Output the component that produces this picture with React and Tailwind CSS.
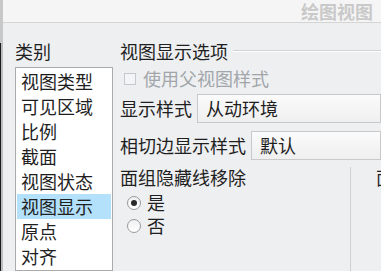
import React from "react";

const font = { fontFamily: '"Noto Sans CJK SC", "Noto Sans", sans-serif' };

function Combo({ text }) {
  return (
    <div className="ml-[5px] flex-1 h-[29px] border border-[#c9c9c9] bg-gradient-to-b from-[#fbfbfb] to-[#efefef] flex items-center pl-[8px] text-[18px] text-[#1f1f1f] whitespace-nowrap">
      {text}
    </div>
  );
}

function Radio({ checked, label }) {
  return (
    <div className="h-[23px] flex items-center pl-[7px]">
      <div className="w-[14px] h-[14px] rounded-full border border-[#9a9a9a] bg-gradient-to-b from-[#f0f0f0] to-[#ffffff] flex items-center justify-center">
        {checked && <div className="w-[6px] h-[6px] rounded-full bg-[#2a2a2a]" />}
      </div>
      <span className="ml-[6px] text-[18px] leading-[23px] text-[#1f1f1f]">{label}</span>
    </div>
  );
}

export default function App() {
  const items = ["视图类型", "可见区域", "比例", "截面", "视图状态", "视图显示", "原点", "对齐"];
  return (
    <div className="w-[381px] h-[271px] overflow-hidden flex bg-[#eeeff1]" style={font}>
      <div className="w-[3px] flex flex-col shrink-0">
        <div className="h-[43px] bg-[#c8c8c8]" />
        <div className="flex-1 bg-[#bdbdbd] border-l border-[#1a1a1a]" />
      </div>
      <div className="flex-1 flex flex-col min-w-0">
        <div className="h-[23px] shrink-0 bg-[#f5f5f6] border-b border-[#d4d4d4] flex items-center justify-end pr-[8px]">
          <span className="text-[18px] leading-[22px] font-bold text-[#c9c9c9]">绘图视图</span>
        </div>
        <div className="flex-1 flex pl-[12px] pt-[16px] min-h-0">
          <div className="w-[98px] shrink-0 flex flex-col">
            <div className="h-[24px] leading-[24px] text-[18px] text-[#1f1f1f]">类别</div>
            <div className="mt-[4px] flex-1 bg-white border border-[#ababab] p-[1px]">
              {items.map((it) => (
                <div
                  key={it}
                  className={
                    "h-[25px] leading-[25px] pl-[4px] text-[18px] text-[#1f1f1f] whitespace-nowrap " +
                    (it === "视图显示" ? "bg-[#b3e0fa]" : "")
                  }
                >
                  {it}
                </div>
              ))}
            </div>
          </div>
          <div className="ml-[7px] flex-1 flex flex-col min-w-0">
            <div className="h-[24px] flex items-center">
              <span className="text-[18px] leading-[24px] text-[#1f1f1f] whitespace-nowrap">视图显示选项</span>
              <div className="ml-[5px] flex-1 h-[2px] border-t border-[#d2d2d2] border-b border-b-white" />
            </div>
            <div className="mt-[4px] h-[23px] flex items-center pl-[4px]">
              <div className="w-[12px] h-[12px] border border-[#c6c9cc] bg-[#f3f4f5]" />
              <span className="ml-[7px] text-[18px] leading-[23px] text-[#a2a6aa] whitespace-nowrap">使用父视图样式</span>
            </div>
            <div className="mt-[4px] flex items-center">
              <span className="text-[18px] text-[#1f1f1f] whitespace-nowrap">显示样式</span>
              <Combo text="从动环境" />
            </div>
            <div className="mt-[8px] flex items-center">
              <span className="text-[18px] text-[#1f1f1f] whitespace-nowrap">相切边显示样式</span>
              <Combo text="默认" />
            </div>
            <div className="flex flex-1 min-h-0">
              <div className="w-[230px] shrink-0 flex flex-col">
                <div className="mt-[5px] h-[24px] leading-[24px] text-[18px] text-[#1f1f1f] whitespace-nowrap">面组隐藏线移除</div>
                <div className="mt-[2px]">
                  <Radio checked label="是" />
                  <Radio label="否" />
                </div>
              </div>
              <div className="mt-[7px] flex-1 border-l border-[#d0d0d0] overflow-hidden">
                <div className="ml-[25px] mt-[-2px] text-[18px] leading-[24px] text-[#1f1f1f] whitespace-nowrap">面</div>
              </div>
            </div>
          </div>
        </div>
      </div>
    </div>
  );
}
